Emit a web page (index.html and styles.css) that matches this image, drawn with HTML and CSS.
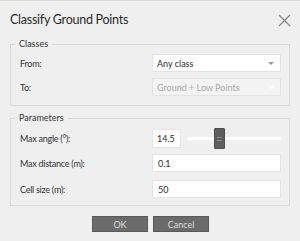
FILE: index.html
```html
<!DOCTYPE html>
<html>
<head>
<meta charset="utf-8">
<link rel="stylesheet" href="styles.css">
</head>
<body>
<div class="dialog">
  <div class="header">
    <div class="title">Classify Ground Points</div>
    <svg class="close" width="13" height="13" viewBox="0 0 13 13"><path d="M1 1 L12 12 M12 1 L1 12" stroke="#8a8a8a" stroke-width="1.4" fill="none"/></svg>
  </div>
  <fieldset class="group">
    <legend>Classes</legend>
    <div class="row">
      <span class="label">From:</span>
      <div class="combo"><span>Any class</span><span class="arrow"></span></div>
    </div>
    <div class="row">
      <span class="label">To:</span>
      <div class="combo disabled"><span>Ground + Low Points</span><span class="arrow"></span></div>
    </div>
  </fieldset>
  <fieldset class="group params">
    <legend>Parameters</legend>
    <div class="row">
      <span class="label">Max angle (°):</span>
      <div class="slider-ctl">
        <div class="field small">14.5</div>
        <div class="slider"><div class="track"></div><div class="handle"><i></i><i></i></div></div>
      </div>
    </div>
    <div class="row">
      <span class="label">Max distance (m):</span>
      <div class="field">0.1</div>
    </div>
    <div class="row">
      <span class="label">Cell size (m):</span>
      <div class="field">50</div>
    </div>
  </fieldset>
  <div class="buttons">
    <div class="btn">OK</div>
    <div class="btn">Cancel</div>
  </div>
</div>
</body>
</html>
```
FILE: styles.css
```css
html, body {
  margin: 0;
  padding: 0;
  background: #efefef;
}
.dialog {
  width: 300px;
  height: 241px;
  box-sizing: border-box;
  border-top: 1px solid #d9ddd6;
  font-family: Lato, "Open Sans", sans-serif;
  color: #333;
  overflow: hidden;
}
.header {
  height: 37px;
  display: flex;
  align-items: center;
  justify-content: space-between;
  padding: 0 9px 0 10px;
}
.title {
  font-size: 12.5px;
  color: #2a2a2a;
  letter-spacing: -0.25px;
}
.close {
  display: block;
  margin-top: 1px;
}
.group {
  margin: 0 10px;
  padding: 4px 8px 9px 8px;
  border: 1px solid #d9d9d9;
  min-width: 0;
}
.group legend {
  padding: 0 4px;
  margin-left: -4px;
  font-size: 9px;
  line-height: 12px;
  color: #333;
}
.params {
  margin-top: 6px;
  padding-bottom: 7px;
}
.row {
  display: grid;
  grid-template-columns: 1fr 129px;
  align-items: center;
  height: 18px;
  font-size: 9px;
}
.row + .row {
  margin-top: 6px;
}
.params .row + .row {
  margin-top: 8px;
}
.label {
  color: #333;
  padding-left: 1px;
  letter-spacing: -0.25px;
}
.combo {
  height: 18px;
  box-sizing: border-box;
  background: #fff;
  border: 1px solid #e2e2e2;
  border-radius: 1px;
  display: flex;
  align-items: center;
  justify-content: space-between;
  padding: 0 6px 0 4px;
  color: #2e2e2e;
}
.combo.disabled {
  background: #f3f3f3;
  color: #aaa;
}
.arrow {
  width: 0;
  height: 0;
  border-left: 3.5px solid transparent;
  border-right: 3.5px solid transparent;
  border-top: 3.5px solid #9a9a9a;
}
.combo.disabled .arrow {
  border-top-color: #fff;
}
.field {
  height: 18px;
  box-sizing: border-box;
  background: #fff;
  border: 1px solid #e4e4e4;
  display: flex;
  align-items: center;
  padding: 0 5px;
  color: #2e2e2e;
}
.slider-ctl {
  display: flex;
  align-items: center;
  gap: 6px;
}
.field.small {
  width: 29px;
  flex: none;
  height: 19px;
  padding: 0 4px;
}
.slider {
  flex: 1;
  position: relative;
  height: 21px;
  display: flex;
  align-items: center;
}
.track {
  flex: 1;
  height: 3px;
  background: #fff;
  border-radius: 1px;
}
.handle {
  position: absolute;
  left: 27px;
  top: 0;
  width: 11px;
  height: 21px;
  box-sizing: border-box;
  background: #5e5e5e;
  border: 1px solid #4d4d4d;
  border-radius: 1px;
  display: flex;
  flex-direction: column;
  align-items: center;
  justify-content: center;
  gap: 2px;
}
.handle i {
  display: block;
  width: 5px;
  height: 1px;
  background: #8a8a8a;
}
.buttons {
  display: flex;
  justify-content: center;
  gap: 5px;
  margin-top: 10px;
  padding-left: 1px;
}
.btn {
  width: 56px;
  height: 16px;
  box-sizing: border-box;
  background: #6b6b6b;
  border: 1px solid #5a5a5a;
  color: #dcdcdc;
  font-size: 9px;
  display: flex;
  align-items: center;
  justify-content: center;
}
```
